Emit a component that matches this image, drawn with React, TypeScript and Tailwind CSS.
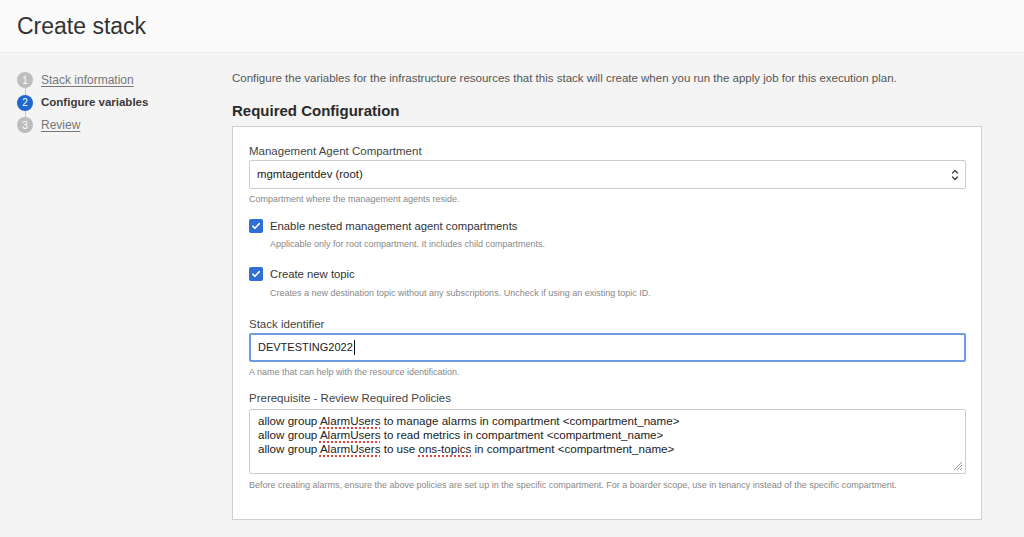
import React from "react";

const font = { fontFamily: '"Liberation Sans", Arial, sans-serif' };

function Step({ n, label, active, last }: { n: number; label: string; active?: boolean; last?: boolean }) {
    return (
        <div className="relative flex h-[22.5px] items-center gap-[8px]">
            {!last && <div className="absolute left-[7.5px] top-[11px] h-[23px] w-px bg-[#c8c8c8]" />}
            <div
                className={
                    "relative z-10 flex h-4 w-4 items-center justify-center rounded-full text-[10px] text-white " +
                    (active ? "bg-[#1f67d2]" : "bg-[#bdbdbd]")
                }
            >
                {n}
            </div>
            {active ? (
                <span className="text-[11.5px] font-bold text-[#3a3a3a]">{label}</span>
            ) : (
                <span className="text-[12px] text-[#777] underline underline-offset-2">{label}</span>
            )}
        </div>
    );
}

function Checkbox() {
    return (
        <div className="flex h-[14px] w-[14px] items-center justify-center rounded-[2px] bg-[#2f6fd6]">
            <svg width="10" height="10" viewBox="0 0 10 10" fill="none">
                <path d="M1.8 5.2 L4 7.3 L8.3 2.6" stroke="white" strokeWidth="1.6" strokeLinecap="round" strokeLinejoin="round" />
            </svg>
        </div>
    );
}

function Spell({ children }: { children: React.ReactNode }) {
    return <span className="underline decoration-[#e0453a] decoration-dotted decoration-[1.5px] underline-offset-[2px]">{children}</span>;
}

export default function App() {
    return (
        <div className="min-h-[537px] w-full bg-[#f4f4f4]" style={font}>
            <header className="flex h-[53px] items-center border-b border-[#ececec] bg-[#fafafa] px-[17px]">
                <h1 className="text-[23px] font-normal text-[#333]">Create stack</h1>
            </header>
            <div className="flex">
                <aside className="w-[232px] pl-[17px] pt-[16px]">
                    <Step n={1} label="Stack information" />
                    <Step n={2} label="Configure variables" active />
                    <Step n={3} label="Review" last />
                </aside>
                <main className="flex-1 pr-[42px] pt-[17px]">
                    <p className="text-[11.5px] leading-4 text-[#555]">
                        Configure the variables for the infrastructure resources that this stack will create when you run the apply job for this execution plan.
                    </p>
                    <h2 className="mt-[15px] text-[15px] font-bold leading-5 text-[#2a2a2a]">Required Configuration</h2>
                    <section className="mt-[5px] border border-[#cfcfcf] bg-white pb-[28px] pl-[16px] pr-[15px] pt-[16px]">
                        <label className="block text-[11.5px] leading-4 text-[#444]">Management Agent Compartment</label>
                        <div className="mt-px flex h-[29px] items-center justify-between rounded-[2px] border border-[#cdcdcd] pl-[7px] pr-[5px]">
                            <span className="text-[11.4px] text-[#222]">mgmtagentdev (root)</span>
                            <svg width="10" height="14" viewBox="0 0 10 14" fill="none">
                                <path d="M2.5 5 L5 2.5 L7.5 5" stroke="#444" strokeWidth="1.4" strokeLinecap="round" strokeLinejoin="round" />
                                <path d="M2.5 9 L5 11.5 L7.5 9" stroke="#444" strokeWidth="1.4" strokeLinecap="round" strokeLinejoin="round" />
                            </svg>
                        </div>
                        <p className="mt-[4px] text-[9px] leading-3 text-[#888]">Compartment where the management agents reside.</p>

                        <div className="mt-[13px] flex h-4 items-center gap-[7px]">
                            <Checkbox />
                            <span className="text-[11.3px] text-[#333]">Enable nested management agent compartments</span>
                        </div>
                        <p className="mt-[4px] pl-[21px] text-[9px] leading-3 text-[#888]">
                            Applicable only for root compartment. It includes child compartments.
                        </p>

                        <div className="mt-[16px] flex h-4 items-center gap-[7px]">
                            <Checkbox />
                            <span className="text-[11.3px] text-[#333]">Create new topic</span>
                        </div>
                        <p className="mt-[5px] pl-[21px] text-[9px] leading-3 text-[#888]">
                            Creates a new destination topic without any subscriptions. Uncheck if using an existing topic ID.
                        </p>

                        <label className="mt-[17px] block text-[11.5px] leading-4 text-[#444]">Stack identifier</label>
                        <div className="mt-px flex h-[29px] items-center rounded-[2px] border-2 border-[#6f9ce0] pl-[7px]">
                            <span className="text-[11px] text-[#222]">DEVTESTING2022</span>
                            <span className="ml-px h-[15px] w-px bg-[#111]" />
                        </div>
                        <p className="mt-[4px] text-[9px] leading-3 text-[#888]">A name that can help with the resource identification.</p>

                        <label className="mt-[12px] block text-[11.5px] leading-4 text-[#444]">Prerequisite - Review Required Policies</label>
                        <div className="relative mt-[3px] h-[65px] rounded-[2px] border border-[#cdcdcd] pl-[8px] pt-[4px] text-[11.6px] leading-[14px] text-[#222]">
                            <div>
                                allow group <Spell>AlarmUsers</Spell> to manage alarms in compartment &lt;compartment_name&gt;
                            </div>
                            <div>
                                allow group <Spell>AlarmUsers</Spell> to read metrics in compartment &lt;compartment_name&gt;
                            </div>
                            <div>
                                allow group <Spell>AlarmUsers</Spell> to use <Spell>ons-topics</Spell> in compartment &lt;compartment_name&gt;
                            </div>
                            <svg className="absolute bottom-[2px] right-[2px]" width="10" height="10" viewBox="0 0 10 10">
                                <path d="M9 1 L1 9 M9 4 L4 9 M9 7 L7 9" stroke="#999" strokeWidth="1" />
                            </svg>
                        </div>
                        <p className="mt-[5px] text-[9px] leading-3 text-[#888]">
                            Before creating alarms, ensure the above policies are set up in the specific compartment. For a boarder scope, use in tenancy instead of the specific compartment.
                        </p>
                    </section>
                </main>
            </div>
        </div>
    );
}
